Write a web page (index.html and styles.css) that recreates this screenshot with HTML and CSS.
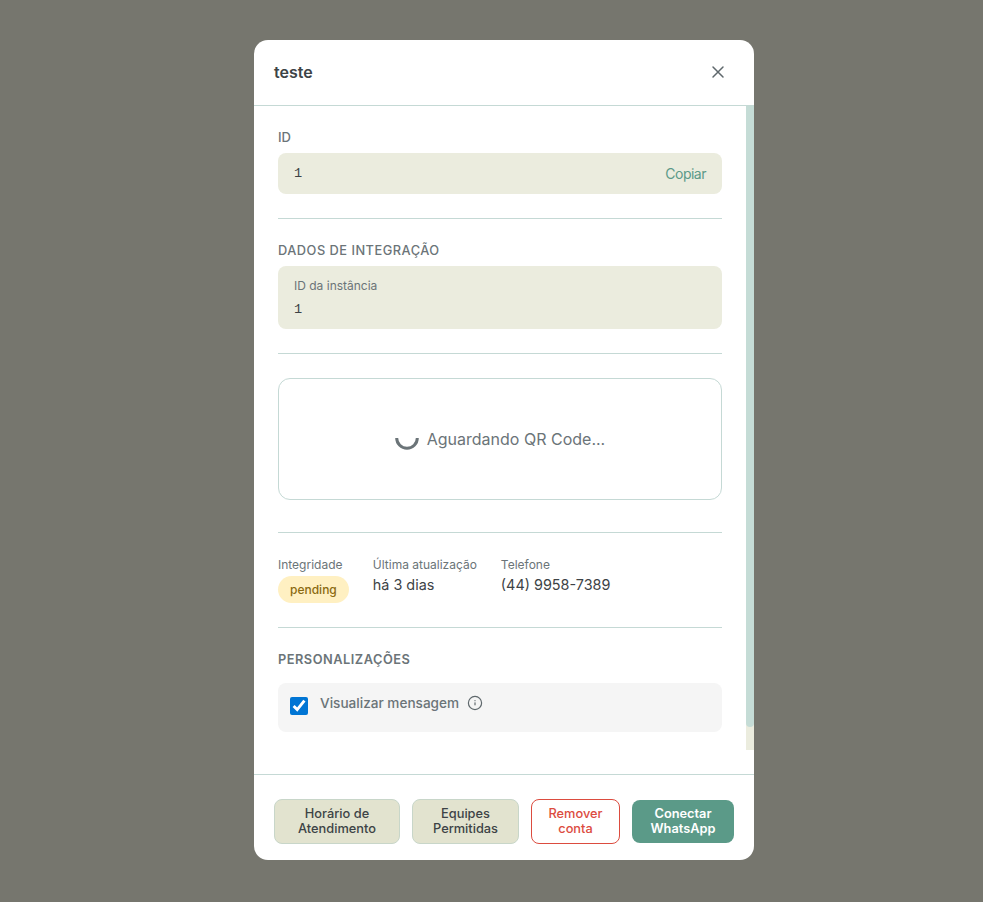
FILE: index.html
```html
<!DOCTYPE html>
<html lang="pt-BR">
<head>
  <meta charset="UTF-8">
  <meta name="viewport" content="width=device-width, initial-scale=1.0">
  <title>teste</title>
  <link rel="stylesheet" href="styles.css">
</head>
<body>
  <div class="modal">
    <header class="modal-header">
      <h1 class="modal-title">teste</h1>
      <button class="close-btn" type="button" aria-label="Fechar">
        <svg width="24" height="24" viewBox="0 0 24 24" fill="none" stroke="currentColor" stroke-width="1.5" stroke-linecap="round">
          <path d="M7 7l10 10M17 7L7 17"/>
        </svg>
      </button>
    </header>

    <div class="modal-body">
      <section class="section">
        <div class="field-label">ID</div>
        <div class="value-box value-row">
          <span class="mono">1</span>
          <a class="copy-link" href="#">Copiar</a>
        </div>
      </section>

      <section class="section">
        <h2 class="section-title">DADOS DE INTEGRAÇÃO</h2>
        <div class="value-box value-stack">
          <div class="small-label">ID da instância</div>
          <div class="mono">1</div>
        </div>
      </section>

      <section class="section section-qr">
        <div class="qr-box">
          <svg class="spinner" width="24" height="24" viewBox="0 0 24 24" fill="none" stroke="#6b7478" stroke-width="3">
            <path d="M1.7 11A10.3 10.3 0 0 0 22.3 11"/>
          </svg>
          <span>Aguardando QR Code...</span>
        </div>
      </section>

      <section class="section stats">
        <div class="stat">
          <div class="small-label">Integridade</div>
          <span class="badge">pending</span>
        </div>
        <div class="stat">
          <div class="small-label">Última atualização</div>
          <div class="stat-value">há 3 dias</div>
        </div>
        <div class="stat">
          <div class="small-label">Telefone</div>
          <div class="stat-value">(44) 9958-7389</div>
        </div>
      </section>

      <section class="section section-last">
        <h2 class="section-title">PERSONALIZAÇÕES</h2>
        <label class="option">
          <input class="option-check" type="checkbox" checked>
          <span class="option-text">Visualizar mensagem</span>
          <svg class="info-icon" width="16" height="16" viewBox="0 0 16 16" fill="none" stroke="currentColor" stroke-width="1.2" stroke-linecap="round">
            <circle cx="8" cy="8" r="6.6"/>
            <path d="M8 7.8v2"/>
            <path d="M8 5.6v.1"/>
          </svg>
        </label>
      </section>

      <div class="scrollbar"><div class="scrollbar-thumb"></div></div>
    </div>

    <footer class="modal-footer">
      <button class="btn btn-soft" type="button">Horário de Atendimento</button>
      <button class="btn btn-soft" type="button">Equipes Permitidas</button>
      <button class="btn btn-danger" type="button">Remover conta</button>
      <button class="btn btn-primary" type="button">Conectar WhatsApp</button>
    </footer>
  </div>
</body>
</html>
```

FILE: styles.css
```css
html, body {
  height: 100%;
}
body {
  margin: 0;
  background-color: #76766e;
  font-family: Inter, "Liberation Sans", sans-serif;
  color: #3d4346;
  overflow: hidden;
}
.modal {
  box-sizing: border-box;
  width: 500px;
  height: 820px;
  margin: 40px 0 0 254px;
  background-color: #fff;
  border-radius: 14px;
  display: flex;
  flex-direction: column;
  overflow: hidden;
}
.modal-header {
  flex: none;
  box-sizing: border-box;
  height: 66px;
  padding: 0 24px 1px 20px;
  border-bottom: 1px solid #c5d9d5;
  display: flex;
  align-items: center;
  justify-content: space-between;
}
.modal-title {
  margin: 0;
  font-size: 16px;
  font-weight: 600;
  color: #3d4346;
}
.close-btn {
  width: 24px;
  height: 24px;
  padding: 0;
  border: none;
  background: none;
  color: #5f686c;
  display: flex;
  cursor: pointer;
}
.modal-body {
  flex: none;
  position: relative;
  height: 644px;
  margin-bottom: 24px;
  overflow: hidden;
}
.scrollbar {
  position: absolute;
  top: 0;
  right: 0;
  bottom: 0;
  width: 8px;
  background-color: #ebecde;
}
.scrollbar-thumb {
  height: 621px;
  background-color: #c5dcd6;
  border-radius: 0 0 4px 4px;
}
.section {
  margin: 0 32px 0 24px;
  padding: 24px 0;
  border-bottom: 1px solid #c5d9d5;
}
.section-qr {
  padding: 24px 0 32px;
}
.section-last {
  border-bottom: none;
  padding-bottom: 0;
}
.field-label {
  font-size: 13px;
  line-height: 15px;
  font-weight: 500;
  color: #6b7478;
  margin-bottom: 8px;
}
.section-title {
  margin: 0 0 8px;
  font-size: 12.8px;
  line-height: 15px;
  font-weight: 500;
  letter-spacing: 0.5px;
  color: #6b7478;
}
.section-last .section-title {
  margin-bottom: 16px;
  font-weight: 600;
}
.value-box {
  background-color: #ebecde;
  border-radius: 8px;
  padding: 0 16px;
}
.value-row {
  height: 41px;
  display: flex;
  align-items: center;
  justify-content: space-between;
}
.value-stack {
  height: 63px;
  box-sizing: border-box;
  padding-top: 12px;
}
.value-stack .small-label {
  margin-bottom: 9px;
}
.mono {
  font-family: "Liberation Mono", monospace;
  font-size: 13.6px;
  line-height: 15px;
  color: #3d4346;
}
.copy-link {
  font-size: 14px;
  letter-spacing: -0.5px;
  color: #5b9a88;
  text-decoration: none;
}
.small-label {
  font-size: 12px;
  line-height: 15px;
  color: #6b7478;
}
.qr-box {
  box-sizing: border-box;
  height: 122px;
  border: 1px solid #c5d9d5;
  border-radius: 12px;
  display: flex;
  align-items: center;
  justify-content: center;
  gap: 8px;
  font-size: 16px;
  color: #6b7478;
}
.spinner {
  flex: none;
}
.stats {
  display: flex;
  gap: 24px;
}
.stat-value {
  margin-top: 4px;
  font-size: 14.4px;
  line-height: 17px;
  color: #3d4346;
}
.badge {
  display: block;
  margin-top: 4px;
  padding: 0 12px;
  height: 27px;
  line-height: 27px;
  border-radius: 14px;
  background-color: #fff0c2;
  color: #8a6a10;
  font-size: 12px;
  font-weight: 500;
}
.option {
  box-sizing: border-box;
  height: 49px;
  padding: 12px;
  background-color: #f5f5f5;
  border-radius: 8px;
  display: flex;
  align-items: flex-start;
}
.option-check {
  width: 18px;
  height: 18px;
  margin: 2px 12px 0 0;
  accent-color: #0075d4;
}
.option-text {
  font-size: 13.6px;
  line-height: 16px;
  font-weight: 500;
  color: #6b7478;
}
.info-icon {
  margin-left: 8px;
  color: #5f686c;
}
.modal-footer {
  flex: none;
  box-sizing: border-box;
  height: 86px;
  padding: 24px 20px 16px;
  border-top: 1px solid #c5d9d5;
  display: grid;
  grid-template-columns: 126px 107px 89px 102px;
  gap: 12px;
  align-items: center;
}
.btn {
  box-sizing: border-box;
  height: 45px;
  padding: 0 8px 2px;
  border-radius: 8px;
  font-family: inherit;
  font-size: 12.8px;
  line-height: 15px;
  font-weight: 500;
  cursor: pointer;
}
.btn-soft {
  background-color: #e2e3cf;
  border: 1px solid #c8d6c9;
  color: #3d4346;
}
.btn-danger {
  background-color: #fff;
  border: 1px solid #dc4c3f;
  color: #dc4c3f;
}
.btn-primary {
  height: 43px;
  background-color: #5b9a88;
  border: none;
  color: #fff;
  font-weight: 600;
}
```
